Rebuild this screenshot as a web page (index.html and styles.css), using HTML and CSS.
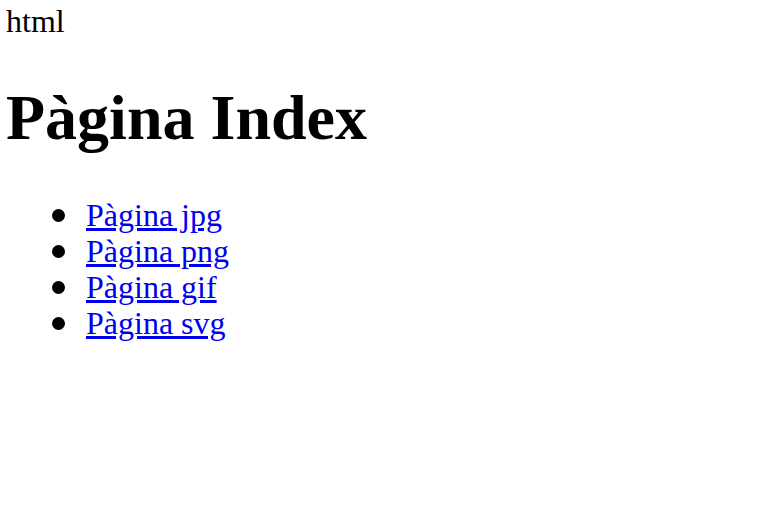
FILE: index.html
```html
<!DOCTYPE html>
<html lang="ca">
<head>
<meta charset="utf-8">
<title>Pàgina Index</title>
<link rel="stylesheet" href="styles.css">
</head>
<body class="page">
<div class="tag">html</div>
<h1 class="title">Pàgina Index</h1>
<ul class="links">
<li class="item"><a href="#">Pàgina jpg</a></li>
<li class="item"><a href="#">Pàgina png</a></li>
<li class="item"><a href="#">Pàgina gif</a></li>
<li class="item"><a href="#">Pàgina svg</a></li>
</ul>
</body>
</html>
```
FILE: styles.css
```css
.page {
  margin: 3px 6px;
  font-family: "Liberation Serif", "Times New Roman", serif;
  font-size: 32px;
  line-height: 36px;
  color: #000;
  background: #fff;
}
.tag {
  margin: 0;
}
.title {
  font-size: 64px;
  line-height: 72px;
  font-weight: bold;
  margin: 43px 0;
}
.links {
  margin: 32px 0;
  padding-left: 80px;
  list-style: none;
}
.item {
  position: relative;
}
.item::before {
  content: "";
  position: absolute;
  left: -34px;
  top: 12px;
  width: 13px;
  height: 13px;
  border-radius: 50%;
  background: #000;
}
.item a {
  color: #0000ee;
}
```
